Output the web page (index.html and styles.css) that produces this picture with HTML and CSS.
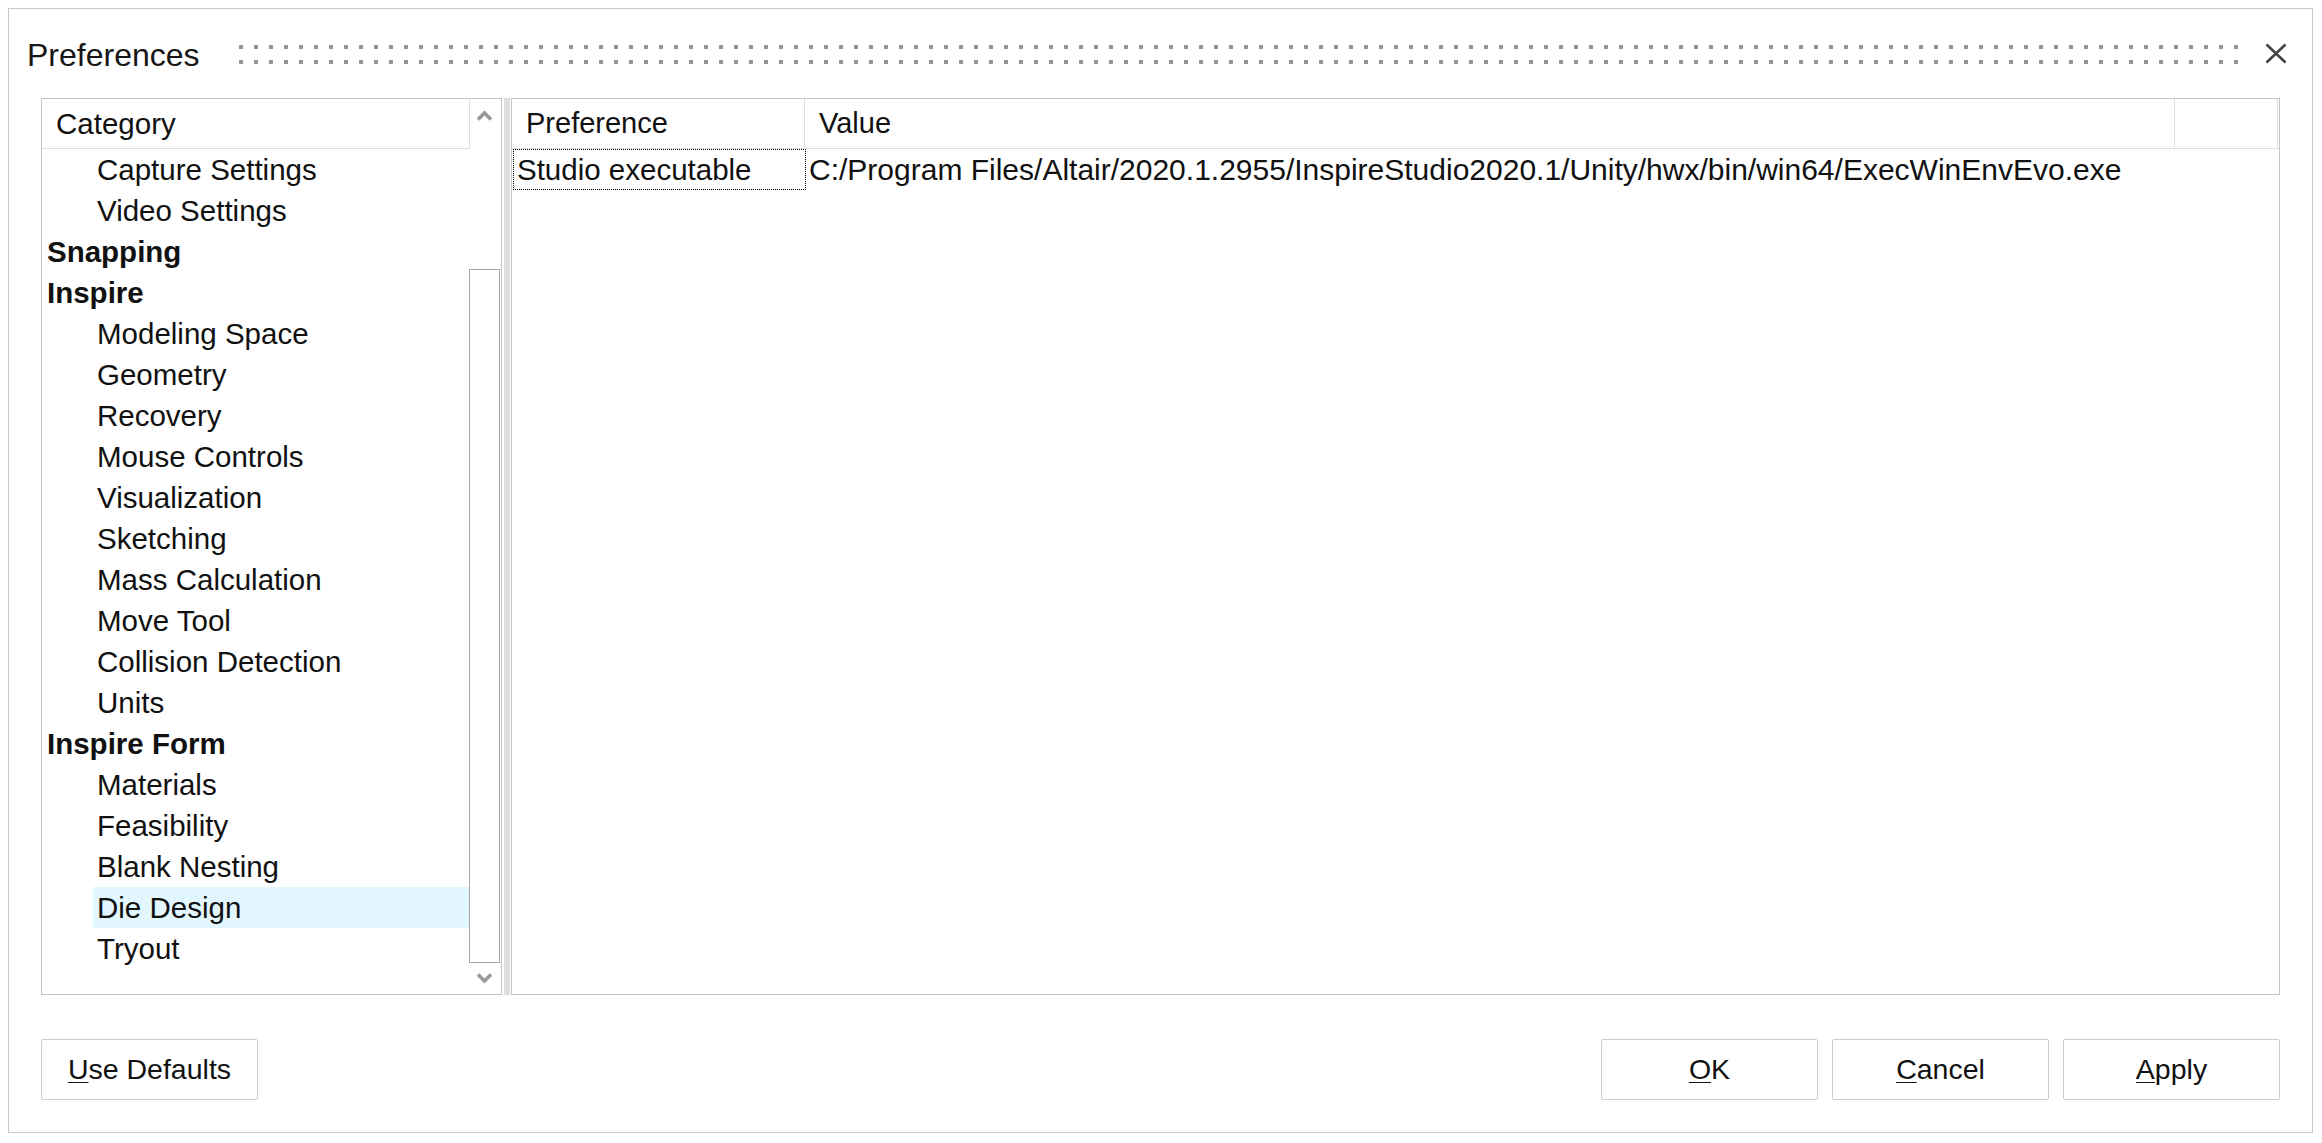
FILE: index.html
```html
<!DOCTYPE html>
<html>
<head>
<meta charset="utf-8">
<title>Preferences</title>
<link rel="stylesheet" href="styles.css">
</head>
<body>
<div class="dialog">
  <div class="titlebar">
    <div class="title">Preferences</div>
    <div class="grip"></div>
    <svg class="close" width="22" height="21" viewBox="0 0 22 21"><path d="M1.5 1.5 L20.5 19.5 M20.5 1.5 L1.5 19.5" stroke="#454545" stroke-width="2.6" fill="none"/></svg>
  </div>
  <div class="panels">
    <div class="left">
      <div class="list">
        <div class="cat-head">Category</div>
        <div class="row child">Capture Settings</div>
        <div class="row child">Video Settings</div>
        <div class="row parent">Snapping</div>
        <div class="row parent">Inspire</div>
        <div class="row child">Modeling Space</div>
        <div class="row child">Geometry</div>
        <div class="row child">Recovery</div>
        <div class="row child">Mouse Controls</div>
        <div class="row child">Visualization</div>
        <div class="row child">Sketching</div>
        <div class="row child">Mass Calculation</div>
        <div class="row child">Move Tool</div>
        <div class="row child">Collision Detection</div>
        <div class="row child">Units</div>
        <div class="row parent">Inspire Form</div>
        <div class="row child">Materials</div>
        <div class="row child">Feasibility</div>
        <div class="row child">Blank Nesting</div>
        <div class="row child sel">Die Design</div>
        <div class="row child">Tryout</div>
      </div>
      <div class="scroll">
        <svg class="sb-up" width="17" height="12" viewBox="0 0 17 12"><path d="M2 10.5 L8.5 4 L15 10.5" stroke="#999" stroke-width="3.6" fill="none"/></svg>
        <div class="thumb"></div>
        <svg class="sb-down" width="17" height="12" viewBox="0 0 17 12"><path d="M2 1.5 L8.5 8 L15 1.5" stroke="#999" stroke-width="3.6" fill="none"/></svg>
      </div>
    </div>
    <div class="splitter"></div>
    <div class="right">
      <div class="grid-head">
        <div class="hcell">Preference</div>
        <div class="hcell">Value</div>
        <div class="hcell"></div>
      </div>
      <div class="data-row">
        <div class="cell-key">Studio executable</div>
        <div class="cell-val">C:/Program Files/Altair/2020.1.2955/InspireStudio2020.1/Unity/hwx/bin/win64/ExecWinEnvEvo.exe</div>
      </div>
    </div>
  </div>
  <div class="footer">
    <button class="btn"><u>U</u>se Defaults</button>
    <div class="spacer"></div>
    <button class="btn"><u>O</u>K</button>
    <button class="btn"><u>C</u>ancel</button>
    <button class="btn"><u>A</u>pply</button>
  </div>
</div>
</body>
</html>
```

FILE: styles.css
```css
html, body {
  margin: 0;
  padding: 0;
  background: #ffffff;
}

body {
  font-family: "Liberation Sans", Arial, sans-serif;
  color: #111111;
}

.dialog {
  margin: 8px 0 0 8px;
  width: 2305px;
  height: 1125px;
  box-sizing: border-box;
  border: 1px solid #c8c8c8;
  display: flex;
  flex-direction: column;
}

.titlebar {
  height: 89px;
  box-sizing: border-box;
  padding: 2px 25px 0 18px;
  display: flex;
  align-items: center;
  flex: none;
}

.title {
  width: 212px;
  flex: none;
  font-size: 32px;
  line-height: 32px;
  color: #161616;
  white-space: nowrap;
}

.grip {
  flex: 1;
  height: 19px;
  background-image:
    linear-gradient(to right, #959595 0 4px, transparent 4px 15px),
    linear-gradient(to right, #959595 0 4px, transparent 4px 15px);
  background-size: 15px 4px, 15px 4px;
  background-position: 0 0, 0 15px;
  background-repeat: repeat-x, repeat-x;
}

.close {
  flex: none;
  margin-left: 24px;
  margin-top: -3px;
}

.panels {
  display: flex;
  height: 897px;
  margin: 0 32px;
  flex: none;
}

.left {
  width: 461px;
  box-sizing: border-box;
  border: 1px solid #c4c4c4;
  display: flex;
  flex: none;
}

.list {
  width: 428px;
  flex: none;
}

.cat-head {
  height: 50px;
  box-sizing: border-box;
  border-right: 1px solid #dddddd;
  border-bottom: 1px solid #dddddd;
  padding-left: 14px;
  display: flex;
  align-items: center;
  font-size: 29.5px;
}

.row {
  height: 41px;
  line-height: 41px;
  font-size: 29.5px;
  white-space: nowrap;
  padding-left: 4px;
}

.row.child {
  margin-left: 51px;
}

.row.parent {
  margin-left: 1px;
  font-weight: bold;
}

.row.sel {
  background: #e2f6fe;
}

.scroll {
  width: 31px;
  flex: none;
  display: flex;
  flex-direction: column;
  align-items: flex-start;
}

.sb-up {
  margin-top: 10px;
  margin-left: 6px;
}

.thumb {
  margin-top: 148px;
  margin-left: -1px;
  width: 31px;
  height: 694px;
  box-sizing: border-box;
  border: 1px solid #a8a8a8;
  background: #ffffff;
}

.sb-down {
  margin-top: 10px;
  margin-left: 6px;
}

.splitter {
  width: 6px;
  flex: none;
  margin: 0 1px 0 2px;
  background: #dedede;
}

.right {
  flex: 1;
  box-sizing: border-box;
  border: 1px solid #c4c4c4;
}

.grid-head {
  display: grid;
  grid-template-columns: 293px 1370px 103px;
  height: 50px;
  box-sizing: border-box;
  border-bottom: 1px solid #dddddd;
}

.hcell {
  box-sizing: border-box;
  border-right: 1px solid #dddddd;
  padding-left: 14px;
  display: flex;
  align-items: center;
  font-size: 29px;
  white-space: nowrap;
}

.data-row {
  display: grid;
  grid-template-columns: 294px 1fr;
  height: 41px;
  font-size: 29.5px;
  white-space: nowrap;
}

.cell-key {
  margin-left: 1px;
  box-sizing: border-box;
  border: 1px dotted #000000;
  padding-left: 3px;
  line-height: 39px;
}

.cell-val {
  padding-left: 3px;
  line-height: 41px;
  font-size: 30px;
}

.footer {
  display: flex;
  height: 61px;
  margin: 44px 32px 0 32px;
  gap: 14px;
  flex: none;
}

.spacer {
  flex: 1;
}

.btn {
  width: 217px;
  height: 61px;
  box-sizing: border-box;
  padding: 0;
  border: 1px solid #cccccc;
  border-radius: 2px;
  background: #ffffff;
  font-family: "Liberation Sans", Arial, sans-serif;
  font-size: 28.5px;
  color: #111111;
  flex: none;
}

.btn u {
  text-decoration-thickness: 1px;
  text-underline-offset: 3px;
}
```
